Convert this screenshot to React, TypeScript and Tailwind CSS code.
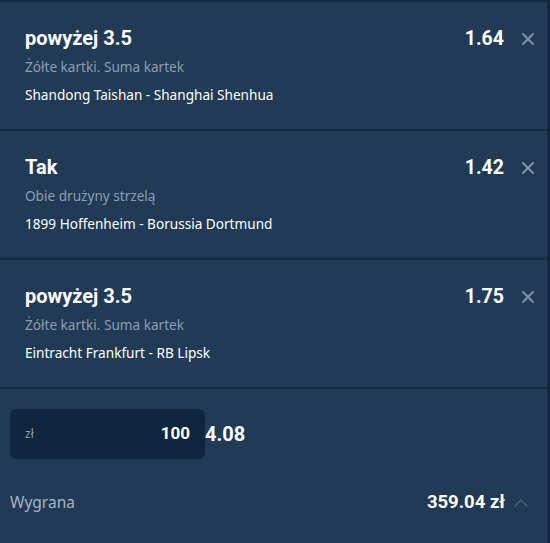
import { X, ChevronUp } from "lucide-react"

interface Bet {
  pick: string
  market: string
  match: string
  odds: string
}

const bets: Bet[] = [
  { pick: "powyżej 3.5", market: "Żółte kartki. Suma kartek", match: "Shandong Taishan - Shanghai Shenhua", odds: "1.64" },
  { pick: "Tak", market: "Obie drużyny strzelą", match: "1899 Hoffenheim - Borussia Dortmund", odds: "1.42" },
  { pick: "powyżej 3.5", market: "Żółte kartki. Suma kartek", match: "Eintracht Frankfurt - RB Lipsk", odds: "1.75" },
]

function BetRow({ bet }: { bet: Bet }) {
  return (
    <div className="flex h-[129px] border-b-2 border-[#142a41] pl-[25px] pr-[9px] pt-[24px]">
      <div className="flex-1">
        <div className="font-['Roboto'] text-[20px] font-bold leading-[24px] text-white">{bet.pick}</div>
        <div className="mt-[8px] text-[13.6px] leading-[18px] text-[#8d9db1]">{bet.market}</div>
        <div className="mt-[10px] text-[13.6px] leading-[18px] text-white">{bet.match}</div>
      </div>
      <div className="flex h-[26px] items-center gap-[14px]">
        <span className="font-['Roboto'] text-[19.5px] font-bold text-white">{bet.odds}</span>
        <X className="h-[20px] w-[20px] text-[#8595a9]" strokeWidth={2.2} />
      </div>
    </div>
  )
}

export default function App() {
  return (
    <div className="h-[543px] w-[550px] overflow-hidden border-t-2 border-r-[3px] border-[#142a41] bg-[#213a55] font-['Noto_Sans',sans-serif]">
      {bets.map((bet, i) => (
        <BetRow key={i} bet={bet} />
      ))}
      <div className="px-[10px] pt-[20px]">
        <div className="flex items-center">
          <div className="flex h-[50px] w-[195px] items-center justify-between rounded-[6px] bg-[#10263f] pl-[15px] pr-[15px]">
            <span className="text-[12px] text-[#8d9db1]">zł</span>
            <span className="font-['Roboto'] text-[17px] font-bold text-white">100</span>
          </div>
          <span className="font-['Roboto'] text-[20px] font-bold text-white">4.08</span>
        </div>
        <div className="mt-[30px] flex items-center pr-[4px]">
          <span className="flex-1 text-[15.5px] text-[#a6b4c4]">Wygrana</span>
          <span className="font-['Roboto'] text-[18.5px] font-bold text-white">359.04 zł</span>
          <ChevronUp className="ml-[4px] h-[24px] w-[24px] text-[#4a607a]" strokeWidth={1.6} />
        </div>
      </div>
    </div>
  )
}
